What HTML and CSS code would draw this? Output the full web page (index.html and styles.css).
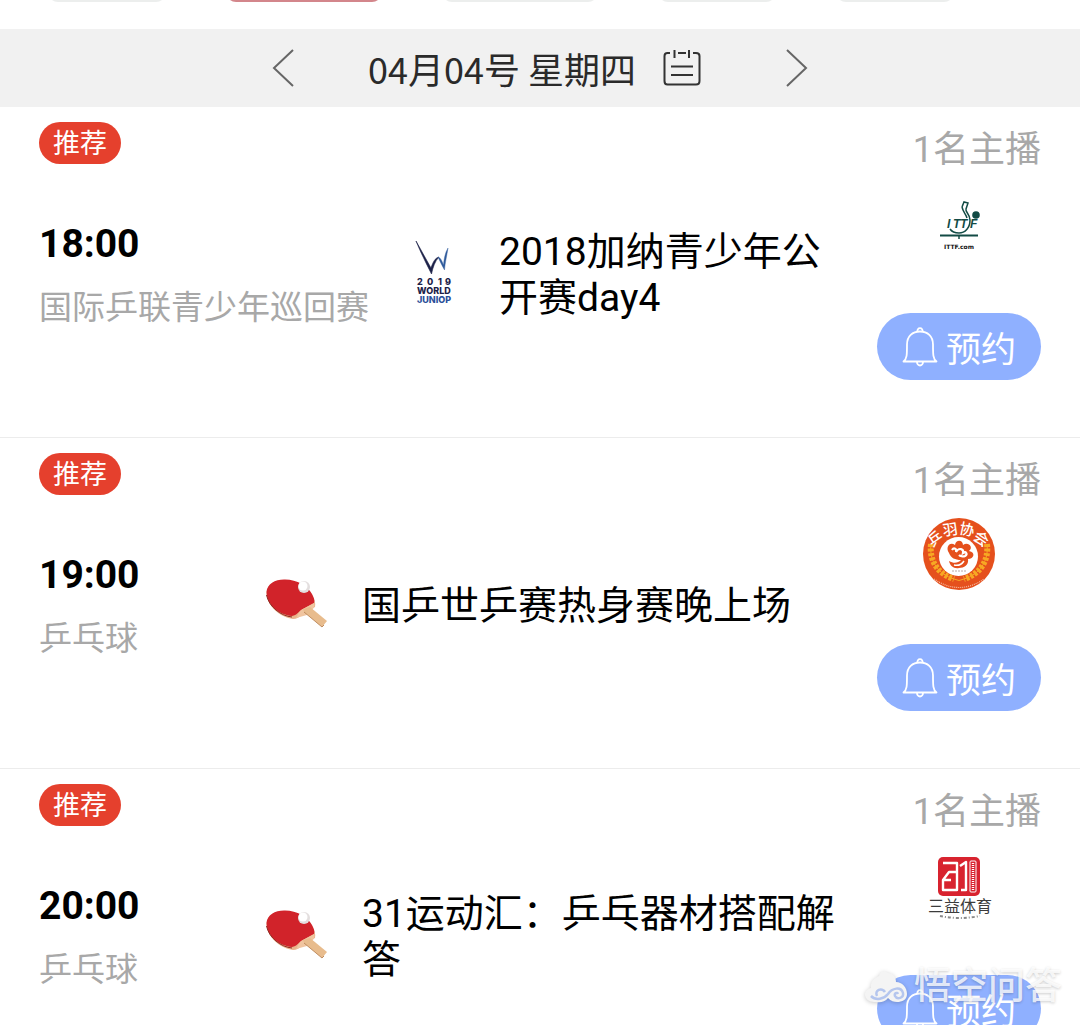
FILE: index.html
```html
<!DOCTYPE html>
<html lang="zh-CN">
<head>
  <meta charset="UTF-8">
  <title>赛程</title>
  <meta name="viewport" content="width=device-width, initial-scale=1.0">
  <link rel="stylesheet" href="styles.css">
</head>
<body>
  <!-- shared icons -->
  <svg class="sprite" aria-hidden="true">
    <symbol id="bell" viewBox="0 0 36 40">
      <g fill="none" stroke="currentColor" stroke-width="1.8" stroke-linejoin="round">
        <path d="M1.500 34.500C5 31.500 5 28 5 17.500C5 9 10.500 4.500 18 4.500S31 9 31 17.500C31 28 31 31.500 34.500 34.500Z"/>
        <path d="M15.500 4.500a2.600 2.600 0 1 1 5 0M15 35a3 3.500 0 0 0 6 0"/>
      </g>
    </symbol>
    <symbol id="paddle" viewBox="0 0 66 66">
      <path d="M2.500 24C2 16 10 10 20 10.500C32 10 44 17 48 25C50 29 52 33 51 37L43 41C38 43 36 49 29 49C17 47 4 38 2.500 24Z" fill="#e9b48c"/>
      <path d="M2.500 22C3 14 11 9.500 20 9.500C32 9 44 16 48 24C50 28 51 30 50 33L39 39C34 42 33 45 28 46C16 45 3 36 2.500 22Z" fill="#d1232a"/>
      <path d="M2.500 25C5 37 17 46 28 47" fill="none" stroke="#8e2723" stroke-width="1"/>
      <path d="M37 40L50 33C51 36 50 38 48 40L43 45L32 48C34 45 34 43 37 40Z" fill="#f0c5a0"/>
      <path d="M39 39L46 37L63 51L58 57L40 42Z" fill="#e8bc8d"/>
      <path d="M40 42L58 57L60 55" fill="none" stroke="#c08d60" stroke-width="1"/>
      <circle cx="40" cy="17" r="6" fill="#e3dede"/>
      <circle cx="39" cy="16" r="4.500" fill="#fff"/>
    </symbol>
  </svg>

  <nav class="tabs" aria-label="分类">
    <div class="tab tab-s"></div>
    <div class="tab tab-l active"></div>
    <div class="tab tab-l"></div>
    <div class="tab tab-s"></div>
    <div class="tab tab-s"></div>
  </nav>

  <header class="date-bar">
    <button class="arrow" aria-label="前一天">
      <svg width="22" height="38" viewBox="0 0 22 38"><path d="M21 1L2 19L21 37"/></svg>
    </button>
    <h1 class="date">04月04号 星期四</h1>
    <button class="calendar" aria-label="选择日期">
      <svg width="38" height="38" viewBox="0 0 38 38"><path d="M7 4H4.500Q1.500 4 1.500 7V32Q1.500 35.500 4.500 35.500H33Q36.500 35.500 36.500 32V7Q36.500 4 33 4H30M15 4H23M11.500 1V9M26 1V9M8 17.500H30M8 26H30"/></svg>
    </button>
    <button class="arrow" aria-label="后一天">
      <svg width="22" height="38" viewBox="0 0 22 38"><path d="M1 1L20 19L1 37"/></svg>
    </button>
  </header>

  <main>
    <article class="match">
      <div class="info">
        <span class="badge">推荐</span>
        <time class="time">18:00</time>
        <span class="league">国际乒联青少年巡回赛</span>
      </div>
      <div class="event">
        <svg class="event-icon" viewBox="0 0 66 66" role="img" aria-label="2019 World Junior">
          <path d="M15 2C20 14 24 22 30.500 35C32 28 34 22 38 18C34 19 32 23 30 29C25 20 20 11 15 2Z" fill="#1c2148" stroke="#1c2148" stroke-width=".6"/>
          <path d="M37 18C39 22 41 27 43.500 31C44 24 46 16 47 9C44 14 43 20 42.500 26C41 22 40 19 37 18Z" fill="#2f5b9c" stroke="#2f5b9c" stroke-width=".4"/>
          <g font-family="Inter, sans-serif" font-weight="800">
            <text x="16 26 37 44" y="46" font-size="9" fill="#1c2148">2019</text>
            <text x="16" y="55" font-size="9" fill="#1c2148">WORLD</text>
            <text x="16" y="64" font-size="9" fill="#2c509a">JUNIOP</text>
          </g>
        </svg>
        <h2 class="title">2018加纳青少年公开赛day4</h2>
      </div>
      <div class="side">
        <span class="hosts">1名主播</span>
        <svg class="host-logo" viewBox="0 0 72 72" role="img" aria-label="ITTF">
          <g fill="none" stroke="#124b45" stroke-width="1.500">
            <path d="M39 20L41 15L45 16L43 22C42 25 47 27 47 33C47 41 42 46 36 46C32 46 29 45 27 42M39 20C40 25 43 27 44 31"/>
            <path d="M17 48.500H55" stroke-width="2.200"/>
            <path d="M36 48V52"/>
          </g>
          <circle cx="53" cy="28" r="3.800" fill="#124b45"/>
          <text x="24 30 37 47" y="41" font-family="Liberation Sans, sans-serif" font-size="12" font-weight="700" font-style="italic" fill="#124b45">ITTF</text>
          <text x="21" y="62" font-family="DejaVu Sans, sans-serif" font-size="6" font-weight="700" fill="#111">ITTF.com</text>
        </svg>
        <button class="book"><svg width="36" height="40" aria-hidden="true"><use href="#bell"/></svg>预约</button>
      </div>
    </article>

    <article class="match">
      <div class="info">
        <span class="badge">推荐</span>
        <time class="time">19:00</time>
        <span class="league">乒乓球</span>
      </div>
      <div class="event">
        <svg class="event-icon" aria-hidden="true"><use href="#paddle"/></svg>
        <h2 class="title">国乒世乒赛热身赛晚上场</h2>
      </div>
      <div class="side">
        <span class="hosts">1名主播</span>
        <svg class="host-logo" viewBox="0 0 72 72" role="img" aria-label="乒羽协会">
          <circle cx="36" cy="36" r="36" fill="#e5501d"/>
          <circle cx="35.500" cy="38.500" r="19.500" fill="#fff"/>
          <!-- wheat ears -->
          <g fill="none" stroke="#f7a823">
            <path d="M8 26C6 43 15 56 31 61" stroke-width="6" stroke-dasharray="3 1.500"/>
            <path d="M64 26C66 43 57 56 41 61" stroke-width="6" stroke-dasharray="3 1.500"/>
            <path d="M8 26C6 43 15 56 31 61Q36 64 41 61C57 56 66 43 64 26" stroke-width="1"/>
          </g>
          <!-- mascot face -->
          <path d="M26 35C22 29 27 23 32 27C33 21 40 22 40 27C45 23 51 29 46 33C53 34 51 41 45 41C46 47 41 50 36 50C31 51 27 48 26 43C31 46 35 45 38 42C32 42 28 40 26 35Z" fill="#e5501d"/>
          <path d="M29 32C31 29 34 31 33 34C36 29 41 31 40 35C43 33 45 36 42 38C40 39 37 38 36 37" fill="none" stroke="#fff" stroke-width="2.200"/>
          <path d="M31 47C35 48 39 46 41 43" fill="none" stroke="#fff" stroke-width="1.500"/>
          <g font-family="Noto Sans CJK SC, sans-serif" font-weight="500" fill="#fff" text-anchor="middle">
            <text x="13" y="26" font-size="15" transform="rotate(-35 13 22)">乒</text>
            <text x="27" y="17" font-size="15" transform="rotate(-8 27 11)">羽</text>
            <text x="44" y="17" font-size="15" transform="rotate(12 44 11)">协</text>
            <text x="58" y="26" font-size="15" transform="rotate(35 58 21)">会</text>
          </g>
          <path d="M11 61Q36 78 61 61" fill="none" stroke="#f6bca5" stroke-width="1.200" stroke-dasharray="1 1"/>
          <path d="M29 53H43" stroke="#b9aaa5" stroke-dasharray="2 1"/>
        </svg>
        <button class="book"><svg width="36" height="40" aria-hidden="true"><use href="#bell"/></svg>预约</button>
      </div>
    </article>

    <article class="match">
      <div class="info">
        <span class="badge">推荐</span>
        <time class="time">20:00</time>
        <span class="league">乒乓球</span>
      </div>
      <div class="event">
        <svg class="event-icon" aria-hidden="true"><use href="#paddle"/></svg>
        <h2 class="title">31运动汇：乒乓器材搭配解答</h2>
      </div>
      <div class="side">
        <span class="hosts">1名主播</span>
        <svg class="host-logo" viewBox="0 0 72 72" role="img" aria-label="三益体育">
          <rect x="15" y="8" width="42" height="39" rx="5" fill="#d8232f"/>
          <g fill="none" stroke="#fff" stroke-width="2.400" stroke-linejoin="round">
            <path d="M20 14H34V41H20V31H28M34 23H26L20 31"/>
            <path d="M37 17L43 13V41H38"/>
            <rect x="47" y="12" width="6" height="31" rx="1" stroke-width="1"/>
            <path d="M50 14V42" stroke-width="2.400" stroke-dasharray="1 1"/>
          </g>
          <text x="5" y="63" font-family="Noto Sans CJK SC, sans-serif" font-size="16" fill="#3c3c3c">三益体育</text>
          <path d="M17 67Q36 71 57 67" fill="none" stroke="#888" stroke-width="2" stroke-dasharray="3 2 1 2"/>
        </svg>
        <button class="book"><svg width="36" height="40" aria-hidden="true"><use href="#bell"/></svg>预约</button>
      </div>
    </article>
  </main>

  <div class="watermark">
    <svg width="46" height="38" viewBox="0 0 46 38" aria-hidden="true">
      <path d="M2 30C-1 25 3 21 7 20C6 14 10 10 15 8C16 3 20 2 24 5C29 5 32 9 32 14C38 14 43 19 43 26C43 32 38 34 33 34C30 34 27 33 24 30C21 34 16 35 12 34C7 34 4 33 2 30Z" fill="#f4f4f4"/>
      <path d="M7 28C12 33 20 31 24 26C28 20 37 18 39 25C40 30 33 32 31 28C30 25 33 24 34 26M13 28C10 22 18 19 21 24" fill="none" stroke="#b5c6ee" stroke-width="2.500"/>
    </svg>
    <span>悟空问答</span>
  </div>
</body>
</html>
```
FILE: styles.css
```css
:root {
  --red: #e5402d;
  --blue: #8fb0ff;
  --grey: #a8a8a8;
  --bar: #f1f1f1;
}

* {
  box-sizing: border-box;
}

body {
  position: relative;
  height: 100vh;
  margin: 0;
  overflow: hidden;
  background: #fff;
  color: #000;
  font-family: Roboto, "Noto Sans CJK SC", sans-serif;
}

button {
  padding: 0;
  border: none;
  background: none;
  font-family: inherit;
  cursor: pointer;
}

svg {
  display: block;
  flex-shrink: 0;
}

.sprite {
  position: absolute;
  width: 0;
  height: 0;
}

/* category tabs, scrolled almost out of view */
.tabs {
  display: flex;
  align-items: flex-end;
  gap: 60px;
  height: 29px;
  padding: 0 48px 27px;
  overflow: hidden;
}

.tab {
  flex-shrink: 0;
  height: 40px;
  border-radius: 10px;
  background: #eceeed;
}

.tab-s {
  width: 118px;
}

.tab-l {
  width: 156px;
}

.tab.active {
  background: #d3868b;
}

.date-bar {
  display: flex;
  align-items: center;
  justify-content: center;
  height: 78px;
  background: var(--bar);
}

.date-bar path {
  fill: none;
  stroke: #333;
  stroke-width: 2;
}

.date-bar .arrow path {
  stroke: #666;
}

.date {
  margin: 0 27px 0 74px;
  color: #2a2a2a;
  font-family: "Noto Sans CJK SC", sans-serif;
  font-size: 36px;
  font-weight: 400;
  line-height: 52px;
}

.calendar {
  margin-right: 85px;
}

.match {
  display: flex;
  padding: 0 39px;
  border-bottom: 1px solid #ececec;
}

.info {
  display: flex;
  flex-direction: column;
  align-items: flex-start;
  min-width: 193px;
  padding-top: 15px;
}

.badge {
  padding: 3px 14px 0;
  border-radius: 21px;
  background: var(--red);
  color: #fff;
  font-size: 27px;
  line-height: 39px;
}

.time {
  margin-top: 57px;
  font-size: 39px;
  font-weight: 700;
  line-height: 46px;
}

.league {
  margin-top: 21px;
  color: var(--grey);
  font-size: 33px;
  line-height: 40px;
  white-space: nowrap;
}

.event {
  display: flex;
  flex: 1;
  align-items: center;
  gap: 32px;
  padding: 0 32px;
}

.event-icon {
  width: 66px;
  height: 66px;
}

.title {
  margin: 0;
  padding-top: 5px;
  font-size: 39px;
  font-weight: 400;
  line-height: 46px;
}

.side {
  display: flex;
  flex-direction: column;
  align-items: center;
  width: 164px;
  padding: 22px 0 57px;
}

.hosts {
  align-self: flex-end;
  color: var(--grey);
  font-size: 36px;
  line-height: 42px;
}

.host-logo {
  width: 72px;
  height: 72px;
  margin: 16px 0 54px;
}

.book {
  display: flex;
  align-items: center;
  justify-content: center;
  gap: 8px;
  width: 100%;
  height: 67px;
  border-radius: 34px;
  background: var(--blue);
  color: #fff;
  font-size: 35px;
}

.watermark {
  position: absolute;
  right: 18px;
  bottom: 16px;
  display: flex;
  align-items: center;
  gap: 4px;
  color: rgba(255, 255, 255, 0.8);
  font-size: 37px;
  font-weight: 500;
  line-height: 44px;
  text-shadow: 0 1px 3px rgba(0, 0, 0, 0.2);
}

.watermark svg {
  filter: drop-shadow(0 1px 2px rgba(0, 0, 0, 0.2));
}
```
